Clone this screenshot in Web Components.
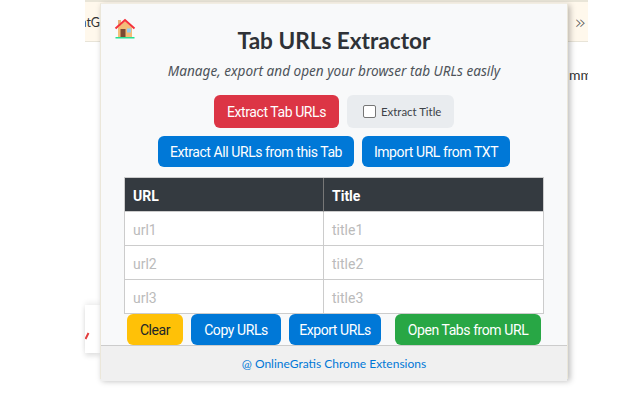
<!DOCTYPE html>
<html><head><meta charset="utf-8">
<style>
html,body{margin:0;padding:0;background:#fff;width:640px;height:400px;overflow:hidden;font-family:Lato,sans-serif}
</style></head><body>
<bg-page></bg-page>
<ext-popup>
  <home-icon slot="icon"></home-icon>
  <span slot="title">Tab URLs Extractor</span>
  <span slot="sub">Manage, export and open your browser tab URLs easily</span>
  <div slot="r1"><ui-btn kind="red" w="125" h="33">Extract Tab URLs</ui-btn><title-check></title-check></div>
  <div slot="r2"><ui-btn kind="blue" w="196" h="31">Extract All URLs from this Tab</ui-btn><ui-btn kind="blue" w="148" h="31">Import URL from TXT</ui-btn></div>
  <url-table slot="table"></url-table>
  <div slot="r3"><ui-btn kind="yellow" w="56" h="31">Clear</ui-btn><ui-btn kind="blue" w="90" h="31">Copy URLs</ui-btn><ui-btn kind="blue" w="92" h="31">Export URLs</ui-btn><ui-btn kind="green" w="146" h="31" style="margin-left:6px">Open Tabs from URL</ui-btn></div>
  <span slot="foot">@ OnlineGratis Chrome Extensions</span>
</ext-popup>
<script>
function def(name,html){customElements.define(name,class extends HTMLElement{constructor(){super();const s=this.attachShadow({mode:'open'});s.innerHTML=html}})}
def('bg-page',`<style>
:host{display:block;width:503px;margin-left:85px;font:14px Lato,sans-serif;color:#333}
.strip{height:2px;background:#e9e5d8}
.bar{height:39px;background:#fff8ec;border-bottom:1px solid #e8e4d8;display:flex;justify-content:space-between;align-items:center;overflow:hidden}
.a{width:15px;overflow:hidden;direction:rtl;white-space:nowrap;font-size:12.500px;margin-top:2px}
.c{font-size:19px;color:#555;margin-right:2px;font-family:"DejaVu Sans",sans-serif;font-weight:300}
.mm{margin-top:23px;height:20px;line-height:20px;text-align:right;font-size:14px;overflow:hidden}
.mm span{display:inline-block;margin-right:-4px}
.card{margin-top:220px;width:15px;height:48px;background:#fff;box-shadow:0 -3px 5px #0000000f,0 3px 5px #0000001f;display:flex;align-items:center;overflow:hidden}
svg{display:block;margin-top:14px}
</style><div class="strip"></div><div class="bar"><span class="a">atG</span><span class="c">»</span></div><div class="mm"><span>mm</span></div>
<div class="card"><svg width="5" height="8" viewBox="0 0 5 8"><path d="M0.500 7L3.500 1" stroke="#e33b3b" stroke-width="2" fill="none"/></svg></div>`);
def('ext-popup',`<style>
:host{position:absolute;left:100px;top:3px;width:468px;height:376px;box-sizing:border-box;background:#f8f9fa;border:1px solid #ebe7da;border-top-color:#f1ede2;box-shadow:2px 2px 6px rgba(0,0,0,.28);display:flex;flex-direction:column;font-family:Lato,sans-serif}
.top{height:0;padding-left:13px}
.top ::slotted(*){margin-top:13px}
h1{margin:19px 0 0;height:36px;line-height:36px;font-size:22.600px;font-weight:700;color:#2f3237;text-align:center}
p{margin:1px 0 0;height:22px;line-height:22px;font-size:13.600px;font-family:"Noto Sans",sans-serif;font-style:italic;color:#4d5359;text-align:center}
.row ::slotted(div){display:flex;gap:8px;justify-content:center}
.r1{margin-top:13px}.r2{margin-top:8px;}
.tbl{margin:10px 23px 0}
.r3{padding-left:26px}
.r3 ::slotted(div){justify-content:flex-start}
footer{flex:1;border-top:1px solid #ccc;background:#f0f0f0;text-align:center;color:#0078d7;font-size:12px;line-height:35px}
</style>
<div class="top"><slot name="icon"></slot></div>
<h1><slot name="title"></slot></h1>
<p><slot name="sub"></slot></p>
<div class="row r1"><slot name="r1"></slot></div>
<div class="row r2"><slot name="r2"></slot></div>
<div class="tbl"><slot name="table"></slot></div>
<div class="row r3"><slot name="r3"></slot></div>
<footer><slot name="foot"></slot></footer>`);
def('ui-btn',`<style>
:host{display:inline-flex;align-items:center;justify-content:center;box-sizing:border-box;border-radius:6px;font:400 14px Roboto,sans-serif;letter-spacing:-.42px;color:#fff;white-space:nowrap}
:host([kind=red]){background:#dc3545}
:host([kind=blue]){background:#0078d7}
:host([kind=yellow]){background:#ffc107;color:#212529}
:host([kind=green]){background:#28a745}
</style><slot></slot>`);
document.querySelectorAll('ui-btn').forEach(b=>{b.style.width=b.getAttribute('w')+'px';b.style.height=b.getAttribute('h')+'px'});
def('title-check',`<style>
:host{display:flex;align-items:center;width:107px;height:33px;box-sizing:border-box;padding-left:16px;gap:5px;background:#e9ecef;border-radius:6px;font:11.400px Lato,sans-serif;color:#3d4248}
i{display:block;width:11px;height:11px;border:1px solid #767676;border-radius:2px;background:#fff}
</style><i></i><span>Extract Title</span>`);
def('url-table',`<style>
:host{display:block;font:14px Roboto,sans-serif}
.g{display:grid;grid-template-columns:199px 1fr;border:1px solid #ccc;border-bottom:0}
.g>div{height:33px;line-height:36px;padding-left:8px;border-bottom:1px solid #ccc;color:#bbb;background:#fff}
.g>div:nth-child(odd){border-right:1px solid #ccc}
.g>.h{background:#343a40;color:#fff;font-weight:700}
.g>.h:first-child{border-right-color:#777}
</style><div class="g"><div class="h">URL</div><div class="h">Title</div><div>url1</div><div>title1</div><div>url2</div><div>title2</div><div>url3</div><div>title3</div></div>`);
def('home-icon',`<style>:host{display:block;width:22px;height:22px}svg{display:block}</style>
<svg width="22" height="22" viewBox="0 0 22 22"><rect x="4" y="3" width="3" height="6" fill="#e8b27a"/><path d="M4 10.5L11 4l7 6.5V20H4z" fill="#f3bd78"/><rect x="6.500" y="12" width="5" height="8" fill="#7a4a33"/><rect x="13" y="11.500" width="4" height="4" fill="#8fcdf5"/><path d="M1.500 11.500L11 3l9.500 8.500" fill="none" stroke="#f4333c" stroke-width="2"/><rect x="1.500" y="20" width="19" height="1.500" fill="#27e08f"/></svg>`);
</script>
</body></html>
